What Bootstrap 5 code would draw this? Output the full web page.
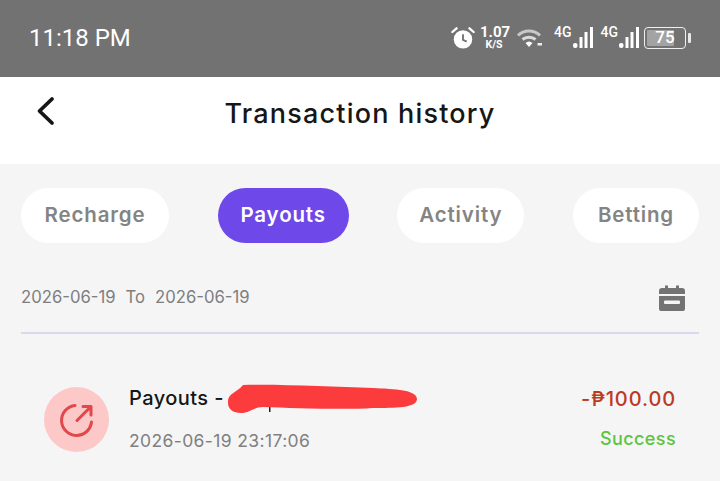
<!DOCTYPE html>
<html lang="en">
<head>
    <title>Transaction history</title>
    <meta name="viewport" content="width=device-width, initial-scale=1">
    <link href="https://cdn.jsdelivr.net/npm/bootstrap@5.3.0/dist/css/bootstrap.min.css" rel="stylesheet">
    <script src="https://cdn.jsdelivr.net/npm/bootstrap@5.3.0/dist/js/bootstrap.bundle.min.js"></script>
    <style>
        html, body { height: 100%; overflow: hidden; }
        body {
            background-color: #f5f5f6;
            font-family: Inter, "Liberation Sans", sans-serif;
        }
        .status-bar {
            height: 77px;
            background: #727272;
            color: #fff;
            padding: 0 29px 2px 29px;
        }
        .status-time {
            font-family: Roboto, sans-serif;
            font-size: 24px;
        }
        .speed {
            font-family: Roboto, sans-serif;
            font-weight: 700;
            text-align: center;
            width: 28px;
            margin: 0 8px 0 5px;
        }
        .speed-num { font-size: 15px; line-height: 14px; display: block; }
        .speed-unit { font-size: 10.5px; line-height: 10px; display: block; margin-top: 1px; }
        .net { font-family: Roboto, sans-serif; font-size: 14px; font-weight: 500; line-height: 1; margin-top: -11px; }
        .net-first { margin-left: 10px; }
        .net-second { margin-left: 7px; }
        .batt-wrap { margin-left: 4px; }
        .batt-box {
            width: 42px;
            height: 22px;
            border: 1.5px solid #f0f0f0;
            border-radius: 4px;
            padding: 2px;
            position: relative;
        }
        .batt-fill { width: 75%; height: 100%; background: #a3a3a3; border-radius: 1px; }
        .batt-num {
            position: absolute;
            inset: 0;
            font-family: Roboto, sans-serif;
            font-size: 17px;
            font-weight: 500;
            line-height: 19px;
            text-align: center;
        }
        .batt-cap { width: 3px; height: 10px; background: #e8e8e8; border-radius: 1px; margin-left: 2px; }
        .top-head { height: 87px; background: #fff; position: relative; padding-bottom: 13px; }
        .back-btn { position: absolute; left: 35px; top: 19px; line-height: 0; }
        .top-title { font-size: 27px; font-weight: 500; color: #161616; letter-spacing: 1.2px; margin: 0; }
        .tabs-row { padding: 24px 21px 0; }
        .pill-tab {
            height: 55px;
            border-radius: 28px;
            background: #fff;
            color: #848484;
            font-size: 20.5px;
            font-weight: 600;
            letter-spacing: .85px;
            padding-bottom: 1px;
        }
        .pill-tab.active-tab { background: #6e48e8; color: #fff; }
        .tab-recharge { width: 148px; }
        .tab-payouts { width: 131px; }
        .tab-activity { width: 127px; }
        .tab-betting { width: 126px; }
        .date-row {
            margin: 26px 21px 0;
            height: 65px;
            padding: 0 13px 5px 0;
            border-bottom: 2px solid #d9d8ef;
            color: #7e7e7e;
            font-size: 16.7px;
        }
        .date-to { margin: 0 10px; }
        .tx-row { padding: 53px 44px 0; }
        .tx-icon {
            width: 65px;
            height: 65px;
            border-radius: 50%;
            background: #fdc8c8;
            margin-right: 20px;
            flex-shrink: 0;
        }
        .tx-body { position: relative; }
        .tx-name { font-size: 20px; font-weight: 500; color: #161616; line-height: 24px; letter-spacing: .45px; margin-top: -1px; }
        .tx-time { font-size: 17.5px; color: #808080; line-height: 24px; margin-top: 19px; letter-spacing: .38px; }
        .scribble { position: absolute; left: 94px; top: -8px; }
        .tx-side { text-align: right; }
        .tx-amount { font-size: 20px; font-weight: 500; color: #bd3a22; line-height: 24px; letter-spacing: .9px; }
        .tx-status { font-size: 18px; font-weight: 500; color: #5cc43e; line-height: 24px; margin-top: 16px; letter-spacing: .4px; }
    </style>
</head>
<body>

    <!-- Phone status bar -->
    <div class="status-bar d-flex align-items-center justify-content-between">
        <span class="status-time">11:18 PM</span>
        <div class="d-flex align-items-center">
            <svg width="24" height="24" viewBox="0 0 26 26">
                <circle cx="13" cy="14.500" r="10" fill="#fff"/>
                <path d="M13 9v6l4 2" fill="none" stroke="#727272" stroke-width="2"/>
                <path d="M1.500 6.500 6 2.500M24.500 6.500 20 2.500" stroke="#fff" stroke-width="2.500" stroke-linecap="round"/>
            </svg>
            <span class="speed"><span class="speed-num">1.07</span><span class="speed-unit">K/S</span></span>
            <svg width="28" height="22" viewBox="0 0 28 22">
                <path d="M2 8.500C8 2.500 18 2.500 24 8.500" fill="none" stroke="#c8c8c8" stroke-width="3"/>
                <path d="M6.500 12.500C10 9.500 16 9.500 19.500 12.500" fill="none" stroke="#dadada" stroke-width="3"/>
                <path d="M9.500 16C12 14 14 14 16.500 16L13 20Z" fill="#fff"/>
                <rect x="21.500" y="16" width="4.500" height="2.500" fill="#eee"/>
            </svg>
            <span class="net net-first">4G</span>
            <svg width="22" height="24" viewBox="0 0 22 24">
                <rect x="1" y="17" width="4.500" height="5" rx="2" fill="#fff"/>
                <rect x="7.500" y="11" width="3" height="11" fill="#fff"/>
                <rect x="12.500" y="6" width="3" height="16" fill="#fff"/>
                <rect x="18" y="1" width="3" height="21" fill="#fff"/>
            </svg>
            <span class="net net-second">4G</span>
            <svg width="22" height="24" viewBox="0 0 22 24">
                <rect x="1" y="17" width="4.500" height="5" rx="2" fill="#fff"/>
                <rect x="7.500" y="11" width="3" height="11" fill="#fff"/>
                <rect x="12.500" y="6" width="3" height="16" fill="#fff"/>
                <rect x="18" y="1" width="3" height="21" fill="#fff"/>
            </svg>
            <div class="batt-wrap d-flex align-items-center">
                <div class="batt-box">
                    <div class="batt-fill"></div>
                    <div class="batt-num">75</div>
                </div>
                <div class="batt-cap"></div>
            </div>
        </div>
    </div>

    <!-- Page header -->
    <div class="top-head d-flex align-items-center justify-content-center">
        <a class="back-btn" href="#">
            <svg width="22" height="30" viewBox="0 0 22 30">
                <path d="M17 3 4.500 15 17 27" fill="none" stroke="#161616" stroke-width="3.800" stroke-linecap="round" stroke-linejoin="round"/>
            </svg>
        </a>
        <h1 class="top-title">Transaction history</h1>
    </div>

    <!-- Tabs -->
    <div class="tabs-row d-flex justify-content-between">
        <div class="pill-tab tab-recharge d-flex align-items-center justify-content-center">Recharge</div>
        <div class="pill-tab tab-payouts active-tab d-flex align-items-center justify-content-center">Payouts</div>
        <div class="pill-tab tab-activity d-flex align-items-center justify-content-center">Activity</div>
        <div class="pill-tab tab-betting d-flex align-items-center justify-content-center">Betting</div>
    </div>

    <!-- Date filter -->
    <div class="date-row d-flex align-items-center justify-content-between">
        <div><span>2026-06-19</span><span class="date-to">To</span><span>2026-06-19</span></div>
        <svg width="28" height="28" viewBox="0 0 28 28">
            <path d="M7 1.500h3V4h8V1.500h3V4h3a3 3 0 0 1 3 3v3H1V7a3 3 0 0 1 3-3h3Z" fill="#737373"/>
            <path d="M1 12h26v13a2 2 0 0 1-2 2H3a2 2 0 0 1-2-2Z" fill="#737373"/>
            <rect x="6" y="16.500" width="16" height="3.500" rx="1" fill="#f5f5f6"/>
        </svg>
    </div>

    <!-- Transaction -->
    <div class="tx-row d-flex align-items-start">
        <div class="tx-icon d-flex align-items-center justify-content-center">
            <svg width="38" height="38" viewBox="0 0 38 38">
                <path d="M17 4.500A15 15 0 1 0 33.500 21" fill="none" stroke="#e2474a" stroke-width="3" stroke-linecap="round"/>
                <path d="M19 19.500 32 6.500M25 5.500h8V14" fill="none" stroke="#e2474a" stroke-width="3" stroke-linecap="round" stroke-linejoin="round"/>
            </svg>
        </div>
        <div class="tx-body flex-grow-1">
            <div class="tx-name">Payouts -</div>
            <div class="tx-time">2026-06-19 23:17:06</div>
            <svg class="scribble" width="196" height="36" viewBox="0 0 196 36">
                <rect x="46" y="26" width="1.500" height="7" fill="#222"/>
                <path d="M5 24C4 14 14 14 20 6 60 5 110 8 150 9 172 10 194 11 194 20 194 29 172 29 150 29 120 31 70 29 40 28 30 28 27 34 18 34 10 34 5 30 5 24Z" fill="#fb3b3c"/>
            </svg>
        </div>
        <div class="tx-side">
            <div class="tx-amount">-₱100.00</div>
            <div class="tx-status">Success</div>
        </div>
    </div>

</body>
</html>
